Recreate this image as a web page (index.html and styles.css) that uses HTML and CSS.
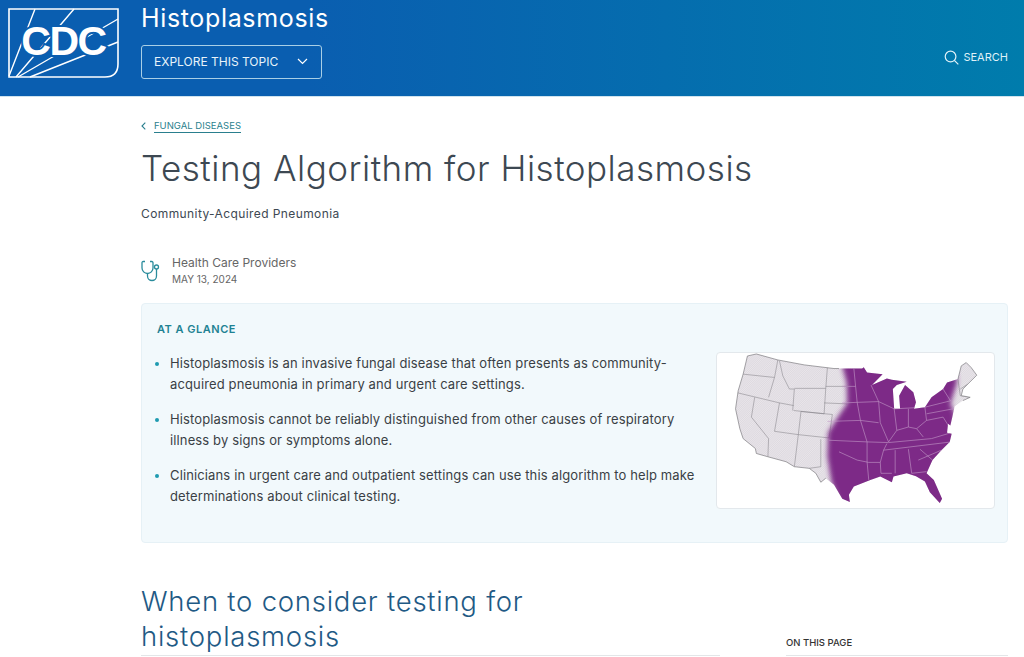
FILE: index.html
```html
<!DOCTYPE html>
<html lang="en">
<head>
  <meta charset="UTF-8" />
  <meta name="viewport" content="width=device-width, initial-scale=1.0" />
  <title>Testing Algorithm for Histoplasmosis</title>
  <link rel="stylesheet" href="styles.css">
</head>
<body>
  <!-- Top banner -->
  <header class="site-header">
    <svg class="logo" viewBox="0 0 111 70" aria-label="CDC">
      <path d="M1 1H110V56Q110 69 97 69H1Z" fill="none" stroke="#fff" stroke-width="1.600"/>
      <path d="M1 68L27 1M8 69L66 1M10 69L110 11M22 69L110 34" stroke="#fff" stroke-width="1.400" fill="none"/>
      <text class="logo-text" x="55.500" y="47" text-anchor="middle">CDC</text>
    </svg>
    <div class="topic">
      <div class="topic-name">Histoplasmosis</div>
      <button class="explore">
        <span>EXPLORE THIS TOPIC</span>
        <svg width="11" height="7" viewBox="0 0 11 7"><path d="M1 1l4.500 4.500L10 1" fill="none" stroke="#fff" stroke-width="1.200"/></svg>
      </button>
    </div>
    <div class="search">
      <svg width="15" height="15" viewBox="0 0 16 16"><circle cx="7" cy="7" r="5.700" fill="none" stroke="#dff1f8" stroke-width="1.300"/><path d="M11 11l4.300 4.300" stroke="#dff1f8" stroke-width="1.300"/></svg>
      <span>SEARCH</span>
    </div>
  </header>

  <main class="content">
    <div class="breadcrumb">
      <svg width="5" height="8" viewBox="0 0 5 8"><path d="M4.300 .7L1 4l3.300 3.300" fill="none" stroke="#2a7f8e" stroke-width="1.100"/></svg>
      <a href="#">FUNGAL DISEASES</a>
    </div>
    <h1>Testing Algorithm for Histoplasmosis</h1>
    <p class="subtitle">Community-Acquired Pneumonia</p>

    <div class="audience">
      <svg width="20" height="22" viewBox="0 0 20 22" fill="none" stroke="#2a8c9c" stroke-width="1.300">
        <path d="M4 1.500H2.200C1.500 1.500 1 2 1 2.700V8c0 3 2.500 5.500 5.500 5.500S12 11 12 8V2.700c0-.7-.5-1.200-1.200-1.200H9"/>
        <path d="M6.500 13.500v2.500c0 2.500 2 4.500 4.500 4.500s4.500-2 4.500-4.500V9"/>
        <circle cx="15.500" cy="7" r="2"/>
      </svg>
      <div>
        <div class="audience-name">Health Care Providers</div>
        <div class="audience-date">MAY 13, 2024</div>
      </div>
    </div>

    <section class="glance">
      <h4>AT A GLANCE</h4>
      <div class="glance-body">
        <ul>
          <li>Histoplasmosis is an invasive fungal disease that often presents as community-acquired pneumonia in primary and urgent care settings.</li>
          <li>Histoplasmosis cannot be reliably distinguished from other causes of respiratory illness by signs or symptoms alone.</li>
          <li>Clinicians in urgent care and outpatient settings can use this algorithm to help make determinations about clinical testing.</li>
        </ul>
        <div class="map-card">
          <svg class="map" viewBox="18 21 834 469" aria-label="Map of the United States with the histoplasmosis region in purple">
            <defs>
              <pattern id="hatch" width="4" height="4" patternUnits="userSpaceOnUse" patternTransform="rotate(45)">
                <rect width="4" height="4" fill="#e9e5ea"/>
                <rect width="1.200" height="4" fill="#d6d1d9"/>
              </pattern>
              <filter id="soft" x="-20%" y="-20%" width="140%" height="140%"><feGaussianBlur stdDeviation="8"/></filter>
              <path id="outline" d="M108 30L135 24L200 42L280 57L370 68L455 68L460 64L470 80L517 85L485 118L530 98L545 102L590 108L560 118L548 130L552 190L570 190L567 150L585 118L610 140L618 170L612 190L645 185L665 155L700 130L712 110L745 100L755 60L770 50L785 65L802 88L775 115L760 130L755 150L782 155L760 165L735 182L728 215L722 240L715 235L712 262L726 265L720 290L695 315L668 345L650 385L672 405L697 462L690 475L660 442L645 410L618 394L590 385L550 395L545 412L510 395L480 405L430 425L415 450L418 472L395 462L370 420L345 400L330 412L315 385L295 370L250 365L225 350L170 335L135 325L132 310L95 280L85 250L72 190L80 135L95 85Z"/>
              <clipPath id="us"><use href="#outline"/></clipPath>
            </defs>
            <g clip-path="url(#us)">
              <rect x="18" y="21" width="834" height="469" fill="url(#hatch)"/>
              <path class="states-west" d="M95 85L190 95M200 42L190 95L172 155M205 45L215 90L235 130L250 130L245 195M72 140L205 172L248 180M250 128L345 128L340 205L248 195M130 155L120 215L172 280L170 335M205 172L190 258L262 268L270 198L365 207L355 278L262 268L250 365M330 282L330 365L295 370M350 65L345 128M345 122L415 122M340 172L410 175"/>
              <path d="M392 50L408 110L410 172L382 215L352 262L350 335L362 410L390 490L750 490L735 200L722 175L742 110L735 50Z" fill="#7d2a87" filter="url(#soft)"/>
              <path class="states-east" d="M430 68L440 170L450 225L470 290L470 350L475 405M395 122L435 122M395 172L505 168M350 228L450 225L505 232M355 285L470 290L535 292L665 280L725 262M482 118L505 168L510 232L535 290M505 168L552 190L560 255L535 290M385 320L440 345L475 352L510 352L520 315L530 295M510 352L512 385L545 385M520 315L725 290M555 315L555 385M595 312L605 385L650 380M625 345L695 315M630 312L668 345M552 190L645 185L650 225L620 250L595 245L595 190M560 255L595 245M650 205L730 190M645 185L725 165M620 250L640 275M650 225L700 215L725 255M700 130L722 165"/>
              <path class="states-west" d="M745 100L752 150M752 150L782 155M752 130L775 115"/>
            </g>
            <path class="coast" d="M385 68L370 68L280 57L200 42L135 24L108 30L95 85L80 135L72 190L85 250L95 280L132 310L135 325L170 335L225 350L250 365L295 370L315 385L330 412L345 400M745 100L755 60L770 50L785 65L802 88L775 115L760 130L755 150L782 155L760 165"/>
          </svg>
        </div>
      </div>
    </section>

    <div class="lower">
      <h2>When to consider testing for histoplasmosis</h2>
      <aside class="on-page">ON THIS PAGE</aside>
    </div>
  </main>
</body>
</html>
```

FILE: styles.css
```css
html, body {
  height: 657px;
  overflow: hidden;
}
body {
  margin: 0;
  font-family: Inter, "Open Sans", sans-serif;
  background: #fff;
  color: #3d4852;
}
.site-header {
  height: 97px;
  display: flex;
  background: linear-gradient(90deg, #0a5eb0 0%, #0a5eb0 30%, #007cac 100%);
  color: #fff;
  border-bottom: 1px solid #cfe3ee;
  box-sizing: border-box;
}
.logo {
  width: 111px;
  height: 70px;
  margin: 8px 22px 0 8px;
  flex: none;
}
.logo-text {
  font-family: "Liberation Sans", sans-serif;
  font-weight: 700;
  font-size: 41px;
  letter-spacing: -1.500px;
  fill: #fff;
  stroke: #0a5eb0;
  stroke-width: 4px;
  paint-order: stroke;
}
.topic {
  padding-top: 2px;
}
.topic-name {
  font-size: 25px;
  line-height: 33px;
  letter-spacing: 0.65px;
}
.explore {
  display: flex;
  align-items: center;
  justify-content: space-between;
  width: 181px;
  height: 34px;
  margin-top: 10px;
  padding: 0 13px 2px 12px;
  background: transparent;
  border: 1px solid #a9cfe6;
  border-radius: 3px;
  color: #e8f3fa;
  font-family: inherit;
  font-size: 12px;
}
.search {
  display: flex;
  align-items: center;
  gap: 4px;
  margin: 48px 16px 0 auto;
  height: 18px;
  font-size: 11px;
  color: #dff1f8;
}
.content {
  padding: 21px 16px 0 141px;
}
.breadcrumb {
  display: flex;
  align-items: center;
  gap: 8px;
  height: 16px;
  font-size: 9.500px;
}
.breadcrumb a {
  color: #2a7f8e;
  text-decoration: none;
  border-bottom: 1px solid #2a7f8e;
  padding-bottom: 1px;
}
h1 {
  margin: 12px 0 0;
  font-size: 35px;
  line-height: 44px;
  font-weight: 300;
  letter-spacing: 0.5px;
  color: #3d4852;
}
.subtitle {
  margin: 15px 0 0;
  font-size: 12px;
  line-height: 18px;
  letter-spacing: 0.4px;
}
.audience {
  display: flex;
  align-items: center;
  gap: 11px;
  margin-top: 31px;
}
.audience-name {
  font-size: 12px;
  line-height: 17px;
  color: #666;
}
.audience-date {
  font-size: 10px;
  line-height: 17px;
  color: #666;
}
.glance {
  margin-top: 15px;
  height: 240px;
  box-sizing: border-box;
  padding: 18px 12px 0 15px;
  background: #f2f9fc;
  border: 1px solid #e6f1f6;
  border-radius: 4px;
}
h4 {
  margin: 0;
  font-size: 11px;
  line-height: 14px;
  font-weight: 600;
  letter-spacing: 0.5px;
  color: #1f8293;
}
.glance-body {
  display: flex;
  justify-content: space-between;
  margin-top: 17px;
}
ul {
  margin: 0;
  padding: 0 0 0 13px;
  width: 532px;
  font-size: 13px;
  line-height: 21px;
  letter-spacing: 0.13px;
  color: #3a3f45;
}
li {
  margin-bottom: 14px;
}
li::marker {
  color: #1f9bb0;
}
.map-card {
  width: 279px;
  height: 157px;
  background: #fff;
  border: 1px solid #e3e8ec;
  border-radius: 4px;
  box-sizing: border-box;
  margin-top: -1px;
  overflow: hidden;
}
.map {
  display: block;
  width: 100%;
  height: 100%;
}
.states-west {
  fill: none;
  stroke: #7c7a80;
  stroke-width: 1.500;
}
.states-east {
  fill: none;
  stroke: #c49bc9;
  stroke-width: 1.800;
}
.coast {
  fill: none;
  stroke: #77757a;
  stroke-width: 2;
}
.lower {
  display: grid;
  grid-template-columns: 579px 222px;
  column-gap: 66px;
  margin-top: 41px;
  align-items: end;
}
h2 {
  margin: 0;
  padding: 0 150px 1px 0;
  font-size: 27.500px;
  line-height: 35px;
  font-weight: 300;
  letter-spacing: 0.75px;
  color: #1f5a85;
  border-bottom: 1px solid #e3e6e8;
}
.on-page {
  font-size: 9.500px;
  font-weight: 500;
  line-height: 14px;
  padding-bottom: 5px;
  color: #333;
  border-bottom: 1px solid #e3e6e8;
}
```
